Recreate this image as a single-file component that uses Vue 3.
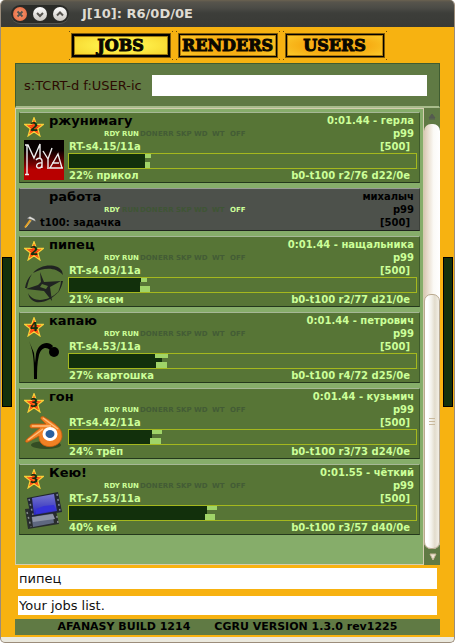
<script setup>
import { ref } from 'vue'

const tabs = ['JOBS', 'RENDERS', 'USERS']
const active = ref('JOBS')
const filter = ref('')
const note = ref('пипец')
const info = ref('Your jobs list.')
const flagNames = ['RDY', 'RUN', 'DON', 'ERR', 'SKP', 'WD', 'WT', 'OFF']

// lanes: [done, running] shares of the bar, in thousandths
const jobs = [
  { name: 'ржунимагу', stars: 2, icon: 'maya', time: '0:01.44 - герла', block: 'RT-s4.15/11a', on: ['RDY', 'RUN'], task: '22% прикол', stats: 'b0-t100 r2/76 d22/0e', lanes: [[219, 17], [219, 0], [219, 14]] },
  { name: 'работа', stars: 0, icon: 'hammer', time: 'михалыч', block: 't100: задачка', on: ['RDY', 'OFF'], off: true },
  { name: 'пипец', stars: 2, icon: 'xsi', time: '0:01.44 - нащальника', block: 'RT-s4.03/11a', on: ['RDY', 'RUN'], task: '21% всем', stats: 'b0-t100 r2/77 d21/0e', lanes: [[208, 17], [205, 0], [205, 29]] },
  { name: 'капаю', stars: 4, icon: 'arc', time: '0:01.44 - петрович', block: 'RT-s4.53/11a', on: ['RDY', 'RUN'], task: '27% картошка', stats: 'b0-t100 r4/72 d25/0e', lanes: [[248, 37], [268, 0], [251, 32]] },
  { name: 'гон', stars: 3, icon: 'blender', time: '0:01.44 - кузьмич', block: 'RT-s4.42/11a', on: ['RDY', 'RUN'], task: '24% трёп', stats: 'b0-t100 r3/73 d24/0e', lanes: [[239, 29], [239, 0], [233, 32]] },
  { name: 'Кею!', stars: 3, icon: 'film', time: '0:01.55 - чёткий', block: 'RT-s7.53/11a', on: ['RDY', 'RUN'], task: '40% кей', stats: 'b0-t100 r3/57 d40/0e', lanes: [[398, 29], [398, 0], [392, 29]] },
]
const share = (n) => ({ width: n / 10 + '%' })
</script>

<template>
  <div class="window">
    <header class="titlebar">
      <div class="controls">
        <button class="ctl close" aria-label="Close">
          <svg viewBox="0 0 14 14"><path d="M4.5 4.5l5 5M9.5 4.5l-5 5" /></svg>
        </button>
        <button class="ctl" aria-label="Minimize">
          <svg viewBox="0 0 14 14"><path d="M4 6l3 3 3-3" /></svg>
        </button>
        <button class="ctl" aria-label="Maximize">
          <svg viewBox="0 0 14 14"><path d="M4 8.500l3-3 3 3" /></svg>
        </button>
      </div>
      <h1>J[10]: R6/0D/0E</h1>
    </header>

    <div class="body">
      <div class="side"><i></i></div>
      <main>
        <nav class="tabs">
          <button v-for="t in tabs" :key="t" class="tab" :class="{ active: t === active }" @click="active = t">
            <span>{{ t }}</span>
          </button>
        </nav>

        <div class="filter">
          <label for="filter">s:TCRT-d f:USER-ic</label>
          <input id="filter" v-model="filter" type="text" />
        </div>

        <div class="listarea">
          <ul class="list">
            <li v-for="j in jobs" :key="j.name" class="job" :class="{ off: j.off }">
              <div class="head">
                <div class="star">
                  <svg v-if="j.stars" viewBox="0 0 20 20">
                    <path d="M10 .8l2.300 6.500 7 .2-5.500 4.300 2 7L10 14.700l-5.800 4.100 2-7L.7 7.500l7-.2z" fill="#f8380c" stroke="#f8d038" stroke-width="1.300" />
                    <path d="M10 3v8M10 11l-5 6M10 11l5 6M10 11L3 8M10 11l7-3" fill="none" stroke="#ff7a24" stroke-width="0.800" />
                  </svg>
                  <b v-if="j.stars">{{ j.stars }}</b>
                </div>
                <h2>{{ j.name }}</h2>
                <span class="right">{{ j.time }}</span>
                <div class="flags">
                  <span v-for="f in flagNames" :key="f" :class="{ lit: j.on.includes(f) }">{{ f }}</span>
                </div>
                <span class="right">p99</span>
              </div>

              <div class="detail">
                <svg v-if="j.icon === 'hammer'" class="small" viewBox="0 0 13 13">
                  <path d="M1 12.500L7 4" stroke="#e8a020" stroke-width="1.800" />
                  <path d="M2 12.500L8 5" stroke="#ffe08a" stroke-width="0.700" />
                  <path d="M3.500 2.500L6.500 .6l5 2.600 1 2.600-2.500-1.200-2.500-1z" fill="#e2e2de" stroke="#777" stroke-width="0.400" />
                </svg>
                <svg v-else-if="j.icon === 'maya'" class="icon" viewBox="0 0 40 40">
                  <defs>
                    <linearGradient id="maya" x2="0" y2="1">
                      <stop offset="0.250" stop-color="#050000" />
                      <stop offset="0.620" stop-color="#7a0000" />
                      <stop offset="0.750" stop-color="#b80000" />
                    </linearGradient>
                  </defs>
                  <rect width="40" height="40" fill="url(#maya)" />
                  <g fill="none" stroke="#eee" stroke-width="1.400">
                    <path d="M1 5h3l6 13 6-14v14M3 5v29M1 34.500h4" />
                    <path d="M12 20c2-3 6-2 6 1v7M18 23c-6-1-7 5-3 5 2 0 3-2 3-4" />
                    <path d="M19 11l5 8 4-11M24 19v8" />
                    <path d="M26 28l8-14 4 14zM28 23h7M23 28h16" />
                  </g>
                </svg>
                <svg v-else-if="j.icon === 'xsi'" class="icon" viewBox="0 0 40 40">
                  <g fill="#202321">
                    <path d="M9 9C16 0 33-1 38 7l1 4C32 3 20 3 9 9z" />
                    <path d="M4 29c5 10 20 9 31-2-9 12-28 17-31 2z" />
                    <path d="M16 8l4 10 17-1-11 6 2 14-8-10-18-2 12-4 3-3zM18 20l-2 3 6 2 2-3z" fill-rule="evenodd" />
                    <path d="M1 24C2 18 4 14 8 10 5 15 4 19 3 24zM37 17h2c-1 5-3 9-5 12 1-4 3-8 3-12z" />
                  </g>
                </svg>
                <svg v-else-if="j.icon === 'arc'" class="icon" viewBox="0 0 40 40">
                  <path d="M5 1l5 12 1 10 1-9C14 3 24 0 29 6l-3 4c-4-4-9-2-11 5-2 8-2 16-2 24h-3c0-16 0-26-5-38z" fill="#000" />
                  <circle cx="30" cy="12" r="5" fill="#000" />
                </svg>
                <svg v-else-if="j.icon === 'blender'" class="icon" viewBox="0 0 40 40">
                  <ellipse cx="22" cy="29" rx="15" ry="4" fill="#344d24" />
                  <path d="M20 1c8 5 19 10 18 20-2 13-24 13-23-1L4 26c-3 1-3-1-1-3L16 12H7c-2-1-1-4 1-4h14l-5-5c-1-2 1-3 3-2z" fill="#f08124" stroke="#c75a0c" stroke-width="0.800" />
                  <path d="M19 2l15 11M8 10h19M4 24l15-11" fill="none" stroke="#ffbd7c" stroke-width="1.500" />
                  <ellipse cx="26" cy="18" rx="7.500" ry="7" fill="#fff" />
                  <ellipse cx="26" cy="18" rx="4.500" ry="4" fill="#285f9f" />
                </svg>
                <svg v-else class="icon" viewBox="0 0 40 40">
                  <defs>
                    <linearGradient id="frame" x2="0" y2="1">
                      <stop offset="0" stop-color="#7777ce" />
                      <stop offset="1" stop-color="#2825bd" />
                    </linearGradient>
                  </defs>
                  <path d="M1 17l30-3 4 18-31 5z" fill="#292d2d" />
                  <path d="M7 20l21-3 2 14-21 4z" fill="#5f6880" />
                  <path d="M8 25l21-3 2 5-22 3z" fill="#8d94a6" />
                  <path d="M3 20l4 15M32 19l2 12" stroke="#868b8c" stroke-width="1.500" stroke-dasharray="2 3" />
                  <path d="M3 6L34 0l4 20-31 5z" fill="#212532" />
                  <path d="M8 6l22-4 3 17-23 4z" fill="url(#frame)" />
                  <path d="M12 17l8-3 10-1 2 5-20 4z" fill="#3632d8" />
                  <path d="M5 7l4 16M33 2l3 17" stroke="#7f8798" stroke-width="1.500" stroke-dasharray="2 3" />
                </svg>

                <div class="lines">
                  <div class="line"><span>{{ j.block }}</span><span>[500]</span></div>
                  <template v-if="j.lanes">
                    <div class="bar" role="progressbar" :aria-valuenow="parseInt(j.task)" aria-valuemin="0" aria-valuemax="100" :aria-label="j.name">
                      <div v-for="(l, i) in j.lanes" :key="i" class="lane">
                        <i class="done" :style="share(l[0])"></i><i class="run" :style="share(l[1])"></i>
                      </div>
                    </div>
                    <div class="line"><span>{{ j.task }}</span><span>{{ j.stats }}</span></div>
                  </template>
                </div>
              </div>
            </li>
          </ul>

          <div class="scroll">
            <button aria-label="Scroll up"><svg viewBox="0 0 16 16"><path d="M8 6l3 4H5zM5 11h6" fill="#555b50" stroke="#555b50" /></svg></button>
            <div class="track">
              <div class="thumb"><i></i><i></i><i></i></div>
            </div>
            <button aria-label="Scroll down"><svg viewBox="0 0 16 16"><path d="M6 5h6L9 11z" fill="#efe6d6" stroke="#c8b89c" /></svg></button>
          </div>
        </div>

        <input v-model="note" class="field note" type="text" aria-label="Annotation" />
        <input v-model="info" class="field info" type="text" aria-label="Information" readonly />
        <footer><span>AFANASY BUILD 1214</span><span>CGRU VERSION 1.3.0 rev1225</span></footer>
      </main>
      <div class="side end"><i></i></div>
    </div>
  </div>
</template>

<style>
body {
  background: #fff;
}
</style>

<style scoped>
* {
  box-sizing: border-box;
}
.window {
  min-height: 100vh;
  display: flex;
  flex-direction: column;
  font-family: "DejaVu Sans", sans-serif;
  font-size: 11px;
  border: solid #9b8c7a;
  border-width: 0 1px 1px;
  border-radius: 5px;
  background: #ebe9de;
  overflow: hidden;
  padding-bottom: 5px;
}
button {
  border: 0;
  padding: 0;
  background: none;
  color: inherit;
  font: inherit;
}
svg {
  display: block;
}
h1,
h2,
ul {
  margin: 0;
  padding: 0;
}

.titlebar {
  height: 27px;
  flex: none;
  display: flex;
  align-items: center;
  gap: 13px;
  padding-left: 10px;
  background: linear-gradient(#6b6250 0, #57544c 2px, #4b4b46 8px, #3d3e3a 13px, #393a36);
}
.titlebar h1 {
  font-size: 13px;
  line-height: 16px;
  color: #dfdbd2;
}
.controls {
  display: flex;
  gap: 6px;
  padding: 2px;
  border-radius: 9px;
  background: #292a27;
  box-shadow: 0 1px 0 #54554f;
}
.ctl {
  width: 14px;
  height: 14px;
  border-radius: 50%;
  background: linear-gradient(#fff, #c9c6c0);
}
.ctl.close {
  background: radial-gradient(#f79a72, #e5623a);
}
.ctl path {
  fill: none;
  stroke: #55534e;
  stroke-width: 2;
}

.body {
  flex: 1;
  display: grid;
  grid-template-columns: 14px minmax(0, 1fr) 14px;
  background: #f7b211;
  padding-bottom: 2px;
}
.side {
  display: flex;
  align-items: center;
  padding: 2px 1px 0;
}
.side.end {
  justify-content: flex-end;
}
.side i {
  width: 10px;
  height: 150px;
  background: #12300c;
  border: 1px solid #000;
}
main {
  display: flex;
  flex-direction: column;
}

.tabs {
  display: flex;
  justify-content: center;
  gap: 3px;
  padding: 4px 0 3px;
}
.tab {
  width: 104px;
  height: 29px;
  padding: 2px;
  background:
    linear-gradient(#6b4c0c, #6b4c0c) 0 0 / 1px 1px no-repeat,
    linear-gradient(#6b4c0c, #6b4c0c) 100% 0 / 1px 1px no-repeat,
    linear-gradient(#6b4c0c, #6b4c0c) 0 100% / 1px 1px no-repeat,
    linear-gradient(#6b4c0c, #6b4c0c) 100% 100% / 1px 1px no-repeat;
}
.tab span {
  display: block;
  height: 25px;
  line-height: 23px;
  border: 1px solid #7d5a0c;
  box-shadow: inset 0 0 0 1px #000, inset 0 0 0 2px #b07c0c;
  background: radial-gradient(ellipse, #f7ae14 50%, #fcd030);
  color: #0a0700;
  font-family: "DejaVu Serif", serif;
  font-size: 16px;
  font-weight: bold;
  -webkit-text-stroke: 1px #0a0700;
}
.tab.active span {
  box-shadow: inset 0 0 0 2px #000, inset 0 0 0 3px #a07c10;
  background: radial-gradient(ellipse, #fff04a 30%, #f4cc24);
}

.filter {
  display: flex;
  align-items: center;
  gap: 10px;
  height: 45px;
  padding: 0 12px 0 8px;
  background: #607a44;
  border: 1px solid #3f5c31;
  border-bottom: 2px solid #a9bc8c;
  font-size: 13px;
  color: #2c0a02;
}
.filter input {
  flex: 1;
  min-width: 0;
  height: 21px;
  border: 0;
  background: #fff;
}

.listarea {
  flex: 1;
  display: flex;
  background: #607a44;
}
.list {
  flex: 1;
  min-width: 0;
  display: flex;
  flex-direction: column;
  gap: 5px;
  padding: 3px;
  list-style: none;
  background: #86ad6a;
  border: 1px solid #d5cdb0;
}
.job {
  padding: 1px 2px 0 4px;
  background: #577536;
  border: 1px solid #3f5a2b;
  border-top-color: #a6b896;
  border-bottom-color: #24381c;
  color: #ccff99;
  font-size: 10px;
  font-weight: bold;
  line-height: 13px;
}
.job.off {
  padding-bottom: 1px;
  background: #4d514b;
  border-color: #999c96 #3c403a #20241e #3c403a;
  color: #000;
}
.head {
  display: grid;
  grid-template-columns: 20px 1fr auto;
  grid-template-rows: 13px 13px;
  column-gap: 5px;
  padding-right: 3px;
}
.star {
  grid-row: span 2;
  position: relative;
  display: flex;
  align-items: center;
  justify-content: center;
  height: 26px;
}
.star svg {
  width: 20px;
  height: 20px;
}
.star b {
  position: absolute;
  color: #123010;
  font-size: 12px;
}
.head h2 {
  font-size: 13px;
  line-height: 13px;
  color: #000;
}
.right {
  text-align: right;
}
.flags {
  display: grid;
  grid-template-columns: repeat(8, 18px);
  padding-left: 55px;
  font-size: 7px;
  line-height: 15px;
  color: #435c35;
}
.off .flags {
  color: #3f5535;
}
.flags .lit {
  color: #ccff99;
}
.detail {
  display: flex;
  gap: 4px;
}
.icon {
  width: 40px;
  height: 40px;
}
.small {
  width: 12px;
  height: 12px;
}
.lines {
  flex: 1;
  min-width: 0;
}
.line {
  display: flex;
  justify-content: space-between;
  padding: 0 7px 0 1px;
}
.off .line {
  padding-left: 0;
}
.bar {
  height: 16px;
  border: 1px solid #a5b81e;
  display: grid;
  grid-template-rows: 4px 4px 6px;
}
.lane {
  display: flex;
}
.done {
  background: #12300c;
}
.run {
  background: #a0d468;
}

.scroll {
  width: 16px;
  display: flex;
  flex-direction: column;
}
.scroll button,
.scroll svg {
  width: 16px;
  height: 16px;
}
.track {
  flex: 1;
  display: flex;
  flex-direction: column;
  justify-content: flex-end;
  border-radius: 7px;
  background: linear-gradient(90deg, #d8c8b4, #ece2d4 30%, #fbfaf6 60%, #fff);
}
.thumb {
  height: 60%;
  display: flex;
  flex-direction: column;
  align-items: center;
  justify-content: center;
  gap: 2px;
  border: 1px solid #b9a98f;
  border-radius: 7px;
  background: linear-gradient(90deg, #fff 20%, #f3f1ea 45%, #e2dccc 70%, #f3efe6);
}
.thumb i {
  width: 6px;
  height: 1px;
  background: #c9b99d;
}

.field {
  margin: 3px 3px 0;
  border: 0;
  padding: 0 1px;
  background: #fff;
  color: #111;
  font-family: inherit;
  font-size: 13px;
}
.note {
  height: 21px;
}
.info {
  height: 19px;
  margin-top: 7px;
}
footer {
  display: flex;
  justify-content: center;
  gap: 24px;
  height: 16px;
  margin-top: 4px;
  background: #607a44;
  color: #000;
  font-weight: bold;
  line-height: 15px;
}
</style>
